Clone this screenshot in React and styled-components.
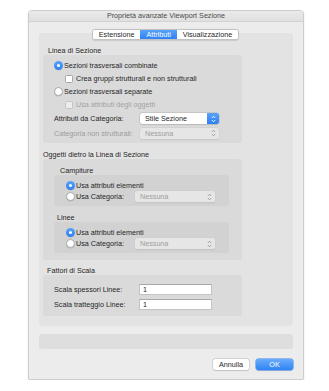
import styled, { createGlobalStyle } from "styled-components";

const Global = createGlobalStyle`
  * { box-sizing: border-box; }
  body {
    margin: 0;
    background: #fff;
    font-family: "Liberation Sans", Arial, sans-serif;
    font-size: 7.2px;
    color: #262626;
  }
`;

const Radio = ({ on }) => (
  <RadioDot $on={on} />
);

const Check = ({ disabled }) => <CheckBox $disabled={disabled} />;

const Arrows = ({ color }) => (
  <svg width="5" height="8" viewBox="0 0 5 8">
    <path d="M0.8 3 L2.5 1.2 L4.2 3 M0.8 5 L2.5 6.8 L4.2 5" fill="none" stroke={color} strokeWidth="0.9" />
  </svg>
);

const Select = ({ value, disabled, width }) => (
  <SelectBox $disabled={disabled} $w={width}>
    <span>{value}</span>
    <SelectKnob $disabled={disabled}>
      <Arrows color={disabled ? "#9a9a9a" : "#fff"} />
    </SelectKnob>
  </SelectBox>
);

const App = () => {
  return (
    <>
      <Global />
      <Window>
        <TitleBar>Proprietà avanzate Viewport Sezione</TitleBar>
        <Body>
          <Tabs>
            <Tab>Estensione</Tab>
            <Tab $active>Attributi</Tab>
            <Tab>Visualizzazione</Tab>
          </Tabs>
          <Panel>
            <GroupLabel $x={5}>Linea di Sezione</GroupLabel>
            <Group $pad="4px 13px 3px 11px">
              <Row>
                <Radio on />
                <RowText>Sezioni trasversali combinate</RowText>
              </Row>
              <Row $indent={11}>
                <Check />
                <RowText $gap={3}>Crea gruppi strutturali e non strutturali</RowText>
              </Row>
              <Row>
                <Radio />
                <RowText>Sezioni trasversali separate</RowText>
              </Row>
              <Row $indent={11}>
                <Check disabled />
                <RowText $gap={3} $muted>Usa attributi degli oggetti</RowText>
              </Row>
              <Row $h={15}>
                <FieldLabel $w={86}>Attributi da Categoria:</FieldLabel>
                <Select value="Stile Sezione" width={79} />
              </Row>
              <Row $h={14}>
                <FieldLabel $w={86} $muted>Categoria non strutturali:</FieldLabel>
                <Select value="Nessuna" width={79} disabled />
              </Row>
            </Group>

            <GroupLabel $x={0} $top={7}>Oggetti dietro la Linea di Sezione</GroupLabel>
            <Group $pad="7px 13px 7px 11px">
              <GroupLabel $x={6}>Campiture</GroupLabel>
              <SubGroup>
                <Row $h={11}>
                  <Radio on />
                  <RowText>Usa attributi elementi</RowText>
                </Row>
                <Row $h={11}>
                  <Radio />
                  <FieldLabel $w={59} $gap={1}>Usa Categoria:</FieldLabel>
                  <Select value="Nessuna" width={80} disabled />
                </Row>
              </SubGroup>
              <GroupLabel $x={3} $top={7}>Linee</GroupLabel>
              <SubGroup>
                <Row $h={11}>
                  <Radio on />
                  <RowText>Usa attributi elementi</RowText>
                </Row>
                <Row $h={11}>
                  <Radio />
                  <FieldLabel $w={59} $gap={1}>Usa Categoria:</FieldLabel>
                  <Select value="Nessuna" width={80} disabled />
                </Row>
              </SubGroup>
            </Group>

            <GroupLabel $x={4} $top={6}>Fattori di Scala</GroupLabel>
            <Group $pad="7px 13px 4px 11px">
              <Row $h={15}>
                <FieldLabel $w={85}>Scala spessori Linee:</FieldLabel>
                <TextInput>1</TextInput>
              </Row>
              <Row $h={15}>
                <FieldLabel $w={85}>Scala tratteggio Linee:</FieldLabel>
                <TextInput>1</TextInput>
              </Row>
            </Group>
          </Panel>
          <StatusBox />
          <Buttons>
            <Button>Annulla</Button>
            <Button $primary>OK</Button>
          </Buttons>
        </Body>
      </Window>
    </>
  );
};

const Window = styled.div`
  margin: 10px 0 0 28px;
  width: 276px;
  height: 370px;
  display: flex;
  flex-direction: column;
  background: #ececec;
  border: 1px solid #cdcdcd;
  border-radius: 4px 4px 2px 2px;
  box-shadow: 0 1px 2px rgba(0, 0, 0, 0.12);
  overflow: hidden;
`;

const TitleBar = styled.div`
  height: 12px;
  flex: none;
  display: flex;
  align-items: center;
  justify-content: center;
  background: linear-gradient(#ebebeb, #e0e0e0);
  border-bottom: 1px solid #d2d2d2;
  color: #4a4a4a;
  margin-top: -1px;
`;

const Body = styled.div`
  flex: 1;
  display: flex;
  flex-direction: column;
  padding: 7px 10px 0 10px;
`;

const Tabs = styled.div`
  position: relative;
  z-index: 1;
  align-self: center;
  display: flex;
  height: 11px;
  margin-left: -1px;
  margin-bottom: -7px;
  border: 1px solid #c2c2c2;
  border-radius: 3px;
  background: #fff;
  box-shadow: 0 0.5px 1px rgba(0, 0, 0, 0.12);
  overflow: hidden;
`;

const Tab = styled.div`
  display: flex;
  align-items: center;
  padding: 0 6px;
  color: ${(p) => (p.$active ? "#fff" : "#262626")};
  background: ${(p) => (p.$active ? "linear-gradient(#5aa2fa, #2c82f5)" : "#fff")};
  & + & {
    border-left: ${(p) => (p.$active ? "none" : "1px solid #d6d6d6")};
  }
`;

const Panel = styled.div`
  height: 293px;
  flex: none;
  display: flex;
  flex-direction: column;
  padding: 13px 51px 10px 4px;
  background: #e3e3e3;
  border-radius: 3px;
`;

const GroupLabel = styled.div`
  height: 9px;
  line-height: 9px;
  margin-left: ${(p) => p.$x}px;
  margin-top: ${(p) => p.$top || 0}px;
  color: #262626;
`;

const Group = styled.div`
  display: flex;
  flex-direction: column;
  padding: ${(p) => p.$pad};
  background: #dadada;
  border-radius: 3px;
`;

const SubGroup = styled.div`
  display: flex;
  flex-direction: column;
  padding: 5px 8px 4px 12px;
  background: #d2d2d2;
  border-radius: 3px;
`;

const Row = styled.div`
  height: ${(p) => p.$h || 13}px;
  display: flex;
  align-items: center;
  padding-left: ${(p) => p.$indent || 0}px;
`;

const RowText = styled.span`
  margin-left: ${(p) => p.$gap ?? 1}px;
  color: ${(p) => (p.$muted ? "#a3a3a3" : "#262626")};
  white-space: nowrap;
`;

const FieldLabel = styled.span`
  width: ${(p) => p.$w}px;
  flex: none;
  margin-left: ${(p) => p.$gap || 0}px;
  color: ${(p) => (p.$muted ? "#9c9c9c" : "#262626")};
  white-space: nowrap;
`;

const RadioDot = styled.span`
  width: 9px;
  height: 9px;
  flex: none;
  border-radius: 50%;
  position: relative;
  background: ${(p) => (p.$on ? "linear-gradient(#5aa2fa, #2c80f4)" : "#fff")};
  border: ${(p) => (p.$on ? "none" : "0.5px solid #a9a9a9")};
  box-shadow: 0 0.5px 0.5px rgba(0, 0, 0, 0.15);
  &::after {
    content: "";
    display: ${(p) => (p.$on ? "block" : "none")};
    position: absolute;
    left: 3px;
    top: 3px;
    width: 3px;
    height: 3px;
    border-radius: 50%;
    background: #fff;
  }
`;

const CheckBox = styled.span`
  width: 8px;
  height: 8px;
  flex: none;
  border-radius: 1.5px;
  background: ${(p) => (p.$disabled ? "#ececec" : "#fff")};
  border: 0.5px solid ${(p) => (p.$disabled ? "#c4c4c4" : "#a6a6a6")};
`;

const SelectBox = styled.div`
  width: ${(p) => p.$w}px;
  height: 11px;
  flex: none;
  display: flex;
  align-items: center;
  justify-content: space-between;
  padding-left: 5px;
  border-radius: 2.5px;
  background: ${(p) => (p.$disabled ? "#e6e6e6" : "#fff")};
  color: ${(p) => (p.$disabled ? "#9d9d9d" : "#262626")};
  box-shadow: 0 0 0 0.5px ${(p) => (p.$disabled ? "#cfcfcf" : "#b5b5b5")}, 0 0.5px 1px rgba(0, 0, 0, 0.12);
  overflow: hidden;
`;

const SelectKnob = styled.div`
  width: 12px;
  height: 100%;
  display: flex;
  align-items: center;
  justify-content: center;
  background: ${(p) => (p.$disabled ? "transparent" : "linear-gradient(#5aa2fa, #2c80f4)")};
`;

const TextInput = styled.div`
  width: 73px;
  height: 11px;
  flex: none;
  display: flex;
  align-items: center;
  padding-left: 3px;
  background: #fff;
  border: 0.5px solid #c4c4c4;
  border-top-color: #a8a8a8;
`;

const StatusBox = styled.div`
  height: 15px;
  margin-top: 8px;
  background: #dedede;
  border-radius: 3px;
`;

const Buttons = styled.div`
  display: flex;
  justify-content: flex-end;
  gap: 7px;
  margin-top: 10px;
`;

const Button = styled.div`
  width: ${(p) => (p.$primary ? 37 : 36)}px;
  height: 11px;
  display: flex;
  align-items: center;
  justify-content: center;
  border-radius: 2.5px;
  color: ${(p) => (p.$primary ? "#fff" : "#262626")};
  background: ${(p) => (p.$primary ? "linear-gradient(#6aacfb, #2f84f5)" : "#fff")};
  box-shadow: 0 0 0 0.5px ${(p) => (p.$primary ? "#3a86ee" : "#bdbdbd")}, 0 0.5px 1px rgba(0, 0, 0, 0.15);
`;

export default App;
